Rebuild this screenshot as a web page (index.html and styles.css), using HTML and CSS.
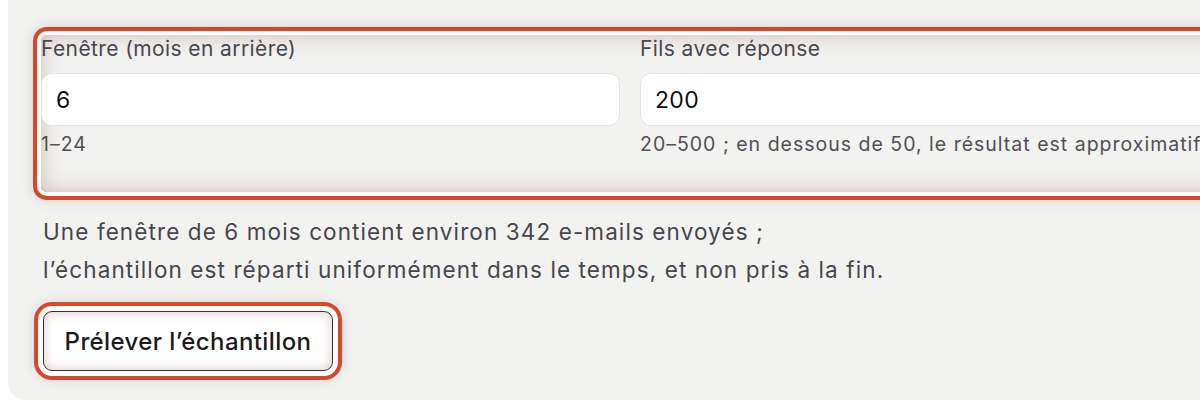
FILE: index.html
```html
<!DOCTYPE html>
<html lang="fr">
<head>
<meta charset="utf-8">
<link rel="stylesheet" href="styles.css">
</head>
<body>
<div class="panel">
  <div class="fields">
    <label class="field">
      <span class="label">Fenêtre (mois en arrière)</span>
      <input class="input" type="text" value="6">
      <span class="hint">1–24</span>
    </label>
    <label class="field">
      <span class="label">Fils avec réponse</span>
      <input class="input" type="text" value="200">
      <span class="hint">20–500 ; en dessous de 50, le résultat est approximatif</span>
    </label>
  </div>
  <p class="note">Une fenêtre de 6 mois contient environ 342 e-mails envoyés ;<br>l’échantillon est réparti uniformément dans le temps, et non pris à la fin.</p>
  <button class="btn" type="button">Prélever l’échantillon</button>
</div>
</body>
</html>
```
FILE: styles.css
```css
html, body {
  margin: 0;
  padding: 0;
  background: #ffffff;
  overflow: hidden;
}
body {
  font-family: Inter, "Noto Sans", sans-serif;
  width: 1200px;
  height: 405px;
}
.panel {
  margin-left: 8px;
  width: 1260px;
  height: 400px;
  box-sizing: border-box;
  background: #f2f2f0;
  border-bottom-left-radius: 18px;
  padding: 35px 0 0 33px;
}
.fields {
  display: grid;
  grid-template-columns: 579px 579px;
  column-gap: 20px;
  width: 1190px;
  height: 157px;
  box-sizing: border-box;
  border-radius: 6px;
  box-shadow:
    inset 0 0 20px rgba(150, 100, 100, 0.4),
    0 0 0 4px #ffffff,
    0 0 0 8px #d9472b,
    0 0 14px 8px rgba(0, 0, 0, 0.12);
}
.field {
  display: flex;
  flex-direction: column;
}
.label {
  font-size: 21px;
  letter-spacing: 0.4px;
  line-height: 28px;
  color: #4a4650;
  margin-bottom: 10px;
}
.input {
  font-family: Inter, "Noto Sans", sans-serif;
  font-size: 23px;
  letter-spacing: 0.3px;
  color: #111;
  height: 53px;
  box-sizing: border-box;
  border: 1px solid #e4e3e1;
  border-radius: 11px;
  background: #fff;
  padding: 0 14px;
  outline: none;
}
.hint {
  margin-top: 4px;
  font-size: 19.5px;
  letter-spacing: 1px;
  line-height: 28px;
  color: #524f57;
}
.note {
  margin: 21px 0 0 2px;
  font-size: 22.5px;
  letter-spacing: 1.1px;
  line-height: 38px;
  color: #46464c;
}
.btn {
  margin: 22px 0 0 2px;
  width: 290px;
  height: 60px;
  font-family: Inter, "Noto Sans", sans-serif;
  font-size: 24px;
  font-weight: 500;
  letter-spacing: 0.4px;
  color: #1b1b1b;
  background: #fff;
  border: 1.5px solid #3a2e2e;
  border-radius: 9px;
  box-shadow:
    inset 0 0 12px rgba(160, 100, 100, 0.35),
    0 0 0 5px #ffffff,
    0 0 0 9px #d9472b,
    0 0 12px 9px rgba(0, 0, 0, 0.12);
}
```
